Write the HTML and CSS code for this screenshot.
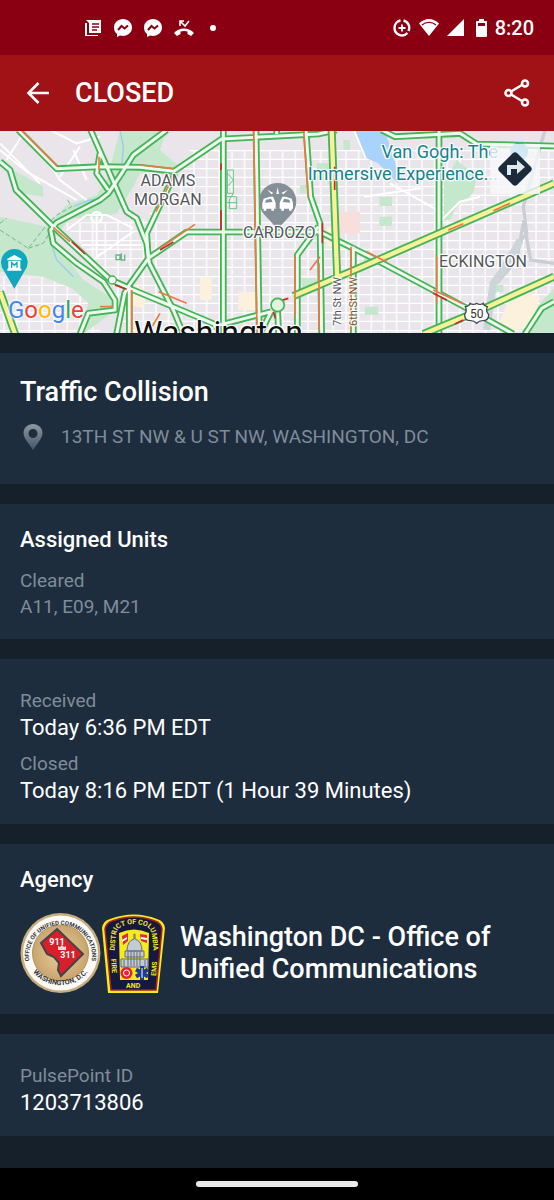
FILE: index.html
```html
<!DOCTYPE html>
<html lang="en">
<head>
  <meta charset="UTF-8" />
  <meta name="viewport" content="width=device-width, initial-scale=1.0" />
  <title>Traffic Collision - PulsePoint</title>
  <link rel="stylesheet" href="styles.css">
</head>
<body>
  <div class="status-bar">
    <div class="status-left">
      <svg width="18" height="18" viewBox="0 0 18 18"><path fill="#fff" d="M5 1h12v13H5V4L2 1zM1 4h2v12h11v1H1z"/><path stroke="#8a0012" stroke-width="1.4" d="M8 5h7M8 8h7M8 11h5"/></svg>
      <svg width="18" height="18" viewBox="0 0 18 18"><path fill="#fff" d="M9 0c5 0 9 3.600 9 8.500S14 17 9 17l-3-.4L3 18v-3C1 13.500 0 11 0 8.500 0 3.600 4 0 9 0z"/><path fill="none" stroke="#8a0012" stroke-width="2" d="M4 11l3.500-4 3 2.500L14 6.500"/></svg>
      <svg width="18" height="18" viewBox="0 0 18 18"><path fill="#fff" d="M9 0c5 0 9 3.600 9 8.500S14 17 9 17l-3-.4L3 18v-3C1 13.500 0 11 0 8.500 0 3.600 4 0 9 0z"/><path fill="none" stroke="#8a0012" stroke-width="2" d="M4 11l3.500-4 3 2.500L14 6.500"/></svg>
      <svg width="20" height="18" viewBox="0 0 20 18"><path fill="none" stroke="#fff" stroke-width="1.600" d="M6 7V2h4M6 2l5 5 4-5"/><path fill="#fff" d="M0 14C5 8 15 8 20 14l-3 3-3.500-2v-2.500c-2-.8-5-.8-7 0V15L3 17z"/></svg>
      <span class="dot"></span>
    </div>
    <div class="status-right">
      <svg width="18" height="18" viewBox="0 0 18 18" fill="none" stroke="#fff"><path stroke-width="2.400" d="M7.500 1.500A7.500 7.500 0 0 0 1.500 9a7.500 7.500 0 0 0 13 5M10.500 1.500a7.500 7.500 0 0 1 5 10.500"/><path stroke-width="1.800" d="M9 5.500v7M5.500 9h7"/></svg>
      <svg width="20" height="17" viewBox="0 0 20 17"><path fill="#fff" d="M0 4.500C6-1.500 14-1.500 20 4.500L10 17z"/><path fill="none" stroke="#8a0012" stroke-width="1.300" d="M3 6c4-3.500 10-3.500 14 0"/></svg>
      <svg width="17" height="17" viewBox="0 0 17 17"><path fill="#fff" d="M17 0v17H0z"/></svg>
      <svg class="battery" width="11" height="18" viewBox="0 0 11 18"><path fill="#fff" d="M3 0h5v2h2q1 0 1 1v14q0 1-1 1H1q-1 0-1-1V3q0-1 1-1h2z"/><path fill="#8a0012" d="M2 4h7v3H2z"/></svg>
      <span class="clock">8:20</span>
    </div>
  </div>

  <header class="app-bar">
    <button class="icon-btn" type="button" aria-label="Back">
      <svg width="24" height="24" viewBox="0 0 24 24" fill="none" stroke="#fff" stroke-width="2.600"><path d="M23 12H3M12.500 2L2.500 12l10 10"/></svg>
    </button>
    <h1>CLOSED</h1>
    <button class="icon-btn" type="button" aria-label="Share">
      <svg width="26" height="28" viewBox="0 0 26 28" fill="none" stroke="#fff" stroke-width="2.600"><path d="M7 12.500L18 6M7 15.500L18 22"/><circle cx="4.500" cy="14" r="3"/><circle cx="21" cy="4.500" r="3"/><circle cx="21" cy="23.500" r="3"/></svg>
    </button>
  </header>

  <div class="map">
    <svg class="map-tiles" viewBox="0 3 1662 606" preserveAspectRatio="xMidYMid slice">
      <defs>
        <pattern id="grid" width="76" height="54" patternUnits="userSpaceOnUse">
          <path class="street" d="M0 8H76M0 34H76M12 0V54M50 0V54"/>
        </pattern>
      </defs>
      <rect width="1662" height="612" fill="#e9e5eb"/>
      <path fill="url(#grid)" d="M190 280L430 270 540 150 570 60H1662V612H380L330 440z"/>
      <path fill="url(#grid)" d="M0 440H180L300 540V612H0z"/>
      <path class="park" d="M360 0H500L480 60 540 110 420 130 400 170 350 250 300 262 210 265 160 330 250 450 330 500 340 545 250 612H240L265 520 215 475 130 440 0 425V260L140 290 200 225 290 195 320 150z"/>
      <path class="park" d="M0 100L40 120 130 170 130 200 60 190z"/>
      <path class="park" d="M1370 90L1430 140 1420 190 1370 230 1350 270H1332V160z"/>
      <path class="park" d="M1560 612L1620 520 1662 475V612zM950 100h50v50h-50zM1030 30h20v30h-20zM1138 200h38v28h-38zM1138 260h38v28h-38zM1092 365l40 15-10 25-30-10zM905 445h45v30h-45zM900 165h25v25h-25zM1095 530h40v25h-40zM1480 465h30v20h-30zM1340 0h30v25h-30z"/>
      <path fill="#f9dfdc" d="M1010 245h70v65h-70z"/>
      <path fill="#fbf1dc" d="M600 440h35v70h-35zM390 455l50 30-10 50-40-10zM715 485h60v55h-60zM1540 475l80 25-30 90-70 18-25-25zM980 290h35v60h-35z"/>
      <path fill="#a9d3fb" d="M1062 0h92l32 100 8 60-60-60-44-20z"/>
      <path class="lane" d="M1062 0l35 85M1092 200l170-25M1320 275l60-60 60-15M0 60l80 65 150 85M0 40l120 120M150 0L230 40 300 20M70 10L20 90M120 60l60 90 80 60M180 140l60-90M220 60l40 90M200 300l60-45h60l80 40M270 395l130-90M245 345h180M290 250v130M1170 160l160 90"/>
      <circle class="lane" cx="290" cy="262" r="16"/>
      <path fill="none" stroke="#9dc9f6" stroke-width="4" d="M360 0l10 50-5 70M150 330l20 60 50 50M220 230l50-20 50-5"/>
      <path fill="none" stroke="#c9ced4" stroke-width="10" d="M1635 0L1570 230 1580 310 1530 370 1480 460 1460 560M1662 400l-70-10-22-120M1570 280l-20 110-60 70"/>
      <path fill="none" stroke="#ccd5d9" stroke-width="22" d="M1560 330l-30 60-50 70-20 140"/>
      <path fill="none" stroke="#78b58d" stroke-width="3" stroke-dasharray="14 7" d="M0 300l85 55 55-70 30-30 45-25-15-25M85 355l45-15 30-50M0 280l20-15"/>
      <path fill="none" stroke="#62c883" stroke-width="3" d="M682 120h18v70h-18zM682 130l18 20-18 20M700 190l-12 20v26h22v-36M680 200h28M680 218h28"/>
      <path fill="none" stroke="#62b883" stroke-width="4" d="M348 375v14h12v-14zM364 370v20h10v-16"/>

      <!-- roads with live traffic: coloured edge, light centre -->
      <g class="edge">
        <path id="r1" d="M55 0L170 116 300 110 420 112 522 124 665 27 955 12 1010 0"/>
        <path id="r2" d="M272 0L380 245 410 265 440 340 448 400 520 540 550 612"/>
        <path id="r3" d="M0 95L30 120 48 180 160 290 330 448 400 480 650 585"/>
        <path id="r4" d="M500 0L400 75 365 130 325 190 300 210 170 278 152 300 160 340 230 400 310 455 345 510 345 540 265 550 240 612"/>
        <path id="r5" d="M350 612L374 490 388 465 445 385 560 306H960M388 470V612"/>
        <path id="r6" d="M525 130L440 310 445 385M300 70L290 130 325 180"/>
        <path id="r7" d="M670 0V612M768 0L778 612M918 0L932 200 960 280 965 612M1317 0V612M1060 350V612"/>
        <path id="r8" d="M955 290L892 375V612M960 306L1110 380 1392 530 1540 612M813 545L640 590M833 545L836 612M813 545L780 612"/>
        <path id="r9" d="M1145 0L1185 20 1380 10 1430 42 1662 48M1662 515L1625 535 1575 612M830 0V12"/>
      </g>
      <g class="core">
        <use href="#r1"/><use href="#r2"/><use href="#r3"/><use href="#r4"/><use href="#r5"/><use href="#r6"/><use href="#r7"/><use href="#r8"/><use href="#r9"/>
      </g>
      <g class="edge wide">
        <path id="h1" d="M995 0L1012 455M880 498L1092 408 1662 160M1270 612L1430 545 1662 440M0 485L50 625"/>
      </g>
      <use class="core highway" href="#h1"/>
      <g class="slow">
        <path d="M65 2L172 109M420 105L520 116M518 142L468 245M297 80V120M160 292L210 335M395 480V612M476 485L560 520M585 283L480 355M761 0L771 612M911 0L925 200M957 400V600M1053 350V600M885 380V560M1310 380V520M930 420L960 380M1100 365L1160 396M1345 300L1390 281M1480 242L1530 220M1300 480L1390 522M300 530H340M480 550L450 600"/>
      </g>
      <path class="jam" d="M215 335L255 372M345 465L380 478M480 360L520 336M663 100V120M663 240V300M1004 110V180M967 280V340M1300 490L1340 510M820 545L826 565M843 512L865 505M1365 582L1390 570"/>
      <circle cx="833" cy="525" r="20" fill="#dff3df" stroke="#43b555" stroke-width="5"/>
      <circle cx="337" cy="450" r="12" fill="#fff" stroke="#43b555" stroke-width="4"/>
      <path fill="#fff" stroke="#444b52" stroke-width="4" d="M1396 530q12-2 14-10 10 6 20 0 10 6 20 0 2 8 12 10-6 12 4 24 0 18-18 18-10 0-18 8-8-8-18-8-18 0-18-18 8-12 2-24z"/>

      <!-- incident pin -->
      <path fill="#858f98" d="M833 297L793 254A56 56 0 1 1 873 254z"/>
      <path fill="#fff" d="M787 220l4-14 18-6h10l6 14 2 6v16h-5v6h-8v-6h-15v6h-8v-6h-4zM879 220l-4-14-18-6h-10l-6 14-2 6v16h5v6h8v-6h15v6h8v-6h4zM829 192l4-20 4 20zM814 193l-12-14 18 10zM850 193l14-14-20 10z"/>
      <path fill="#858f98" d="M795 218l3-9 15-3 5 10zM871 218l-3-9-15-3-5 10z"/>
      <!-- museum pin -->
      <path fill="#13a7bd" d="M43 476L11 421A40 40 0 1 1 75 421z"/>
      <path fill="#fff" d="M22 386l21-11 21 11v5H22zM25 393h36v23h3v6H22v-6h3z"/>
      <path fill="none" stroke="#13a7bd" stroke-width="4" d="M35 413v-15l8 8 8-8v15"/>
      <circle cx="1558" cy="64" r="27" fill="#35afe2"/>
    </svg>
    <span class="place adams">ADAMS<br>MORGAN</span>
    <span class="place cardozo">CARDOZO</span>
    <span class="place eckington">ECKINGTON</span>
    <span class="place city">Washington</span>
    <span class="place poi">Van Gogh: The<br>Immersive Experience...</span>
    <span class="place street-name seventh">7th St NW</span>
    <span class="place street-name sixth">6th St NW</span>
    <span class="place route">50</span>
    <span class="google"><i class="b">G</i><i class="r">o</i><i class="y">o</i><i class="b">g</i><i class="g">l</i><i class="r">e</i></span>
    <button class="directions" type="button" aria-label="Directions">
      <svg width="34" height="34" viewBox="0 0 34 34"><path fill="#1c2b3b" d="M15 1q2-1.500 4 0l14 14q1.500 2 0 4L19 33q-2 1.500-4 0L1 19q-1.500-2 0-4z"/><path fill="#dfe9ee" d="M9 23V13h10V8l8 7-8 7v-5h-6v6z"/></svg>
    </button>
  </div>

  <main>
    <section class="card incident">
      <h2 class="title">Traffic Collision</h2>
      <p class="address">
        <svg width="20" height="26" viewBox="0 0 20 26"><defs><linearGradient id="pin" x2="0" y2="1"><stop stop-color="#8d98a5"/><stop offset="1" stop-color="#455363"/></linearGradient></defs><path fill="url(#pin)" fill-rule="evenodd" d="M10 26L3 16C-3 7 3 0 10 0s13 7 7 16zM10 5a4.500 4.500 0 1 0 0 9 4.500 4.500 0 0 0 0-9z"/></svg>
        <span>13TH ST NW &amp; U ST NW, WASHINGTON, DC</span>
      </p>
    </section>

    <section class="card units">
      <h3>Assigned Units</h3>
      <p class="label">Cleared</p>
      <p class="label">A11, E09, M21</p>
    </section>

    <section class="card fields">
      <p class="label">Received</p>
      <p class="value">Today 6:36 PM EDT</p>
      <p class="label">Closed</p>
      <p class="value">Today 8:16 PM EDT (1 Hour 39 Minutes)</p>
    </section>

    <section class="card agency">
      <h3>Agency</h3>
      <div class="agency-row">
        <svg width="146" height="82" viewBox="0 0 146 82">
          <defs>
            <radialGradient id="gold"><stop stop-color="#e8cf9f"/><stop offset="1" stop-color="#c9a56e"/></radialGradient>
            <path id="arcTop" d="M9.500 50A31.500 31.500 0 1 1 71.500 50"/>
            <path id="arcBottom" d="M6 46A35.500 35.500 0 0 0 75 46"/>
            <path id="shieldArc" d="M94 43L96 23Q97 16 103 14 114 10 125 14 131 16 132 23L134 43"/>
          </defs>
          <!-- Office of Unified Communications seal -->
          <circle cx="40.500" cy="41" r="40" fill="#c9ad7c"/>
          <circle cx="40.500" cy="41" r="37.500" fill="#fbfaf6"/>
          <circle cx="40.500" cy="41" r="28" fill="url(#gold)" stroke="#b3925c"/>
          <path fill="#d91f2a" stroke="#424448" stroke-width="2" d="M37 17L63 42 41 64 38 58 39 51 34 45 27 42 21 31z"/>
          <text class="seal-num" x="37" y="33">911</text>
          <text class="seal-num" x="48" y="46">311</text>
          <path fill="#f3d3d4" d="M38 38V34l2 1 2-2 2 2 2-1v4z"/>
          <text class="seal-text"><textPath href="#arcTop" startOffset="50%" text-anchor="middle">OFFICE OF UNIFIED COMMUNICATIONS</textPath></text>
          <text class="seal-text seal-city"><textPath href="#arcBottom" startOffset="50%" text-anchor="middle">WASHINGTON, D.C.</textPath></text>
          <!-- Fire and EMS patch -->
          <path fill="#f7ea1d" d="M82 16Q83 9 90 7 114-2 137 7 144 9 145 16L138 81H88z"/>
          <path fill="#15193f" stroke="#a52023" stroke-width="1.500" d="M85 17Q86 11 92 9 114 1 135 9 141 11 142 17L136 78H91z"/>
          <path fill="#f7ea1d" d="M99 21Q114 14 129 21L128 68H100z"/>
          <path fill="#d6303a" d="M102 24l6-3v8l-5 4zM120 22l7 1v8l-6-2z"/>
          <path fill="#fff" d="M102 28l5-3v2l-5 3zM121 25l6 1v2l-6-1z"/>
          <path fill="#c4cbd6" stroke="#626b7b" d="M107 39q0-10 7-12v-5h1v5q7 2 7 12zM105 39h19v6h-19zM101 47h27v8h-27z"/>
          <path stroke="#626b7b" d="M108 40v14M111 40v14M114 40v14M117 40v14M120 40v14M104 48v7M125 48v7"/>
          <circle cx="106.500" cy="61" r="6" fill="#e3222c"/>
          <circle cx="106.500" cy="61" r="3" fill="none" stroke="#fff"/>
          <path stroke="#1d3c93" stroke-width="4" d="M122 54v14M116 57.500l12 7M116 64.500l12-7"/>
          <path stroke="#fff" d="M122 56v10"/>
          <text class="patch-text"><textPath href="#shieldArc" startOffset="50%" text-anchor="middle">DISTRICT OF COLUMBIA</textPath></text>
          <text class="patch-text" transform="translate(91 47) rotate(86)">FIRE</text>
          <text class="patch-text" transform="translate(136 64) rotate(-86)">EMS</text>
          <text class="patch-text" x="106" y="76">AND</text>
        </svg>
        <p class="title">Washington DC - Office of Unified Communications</p>
      </div>
    </section>

    <section class="card fields">
      <p class="label">PulsePoint ID</p>
      <p class="value">1203713806</p>
    </section>
  </main>

  <div class="nav-bar"><span class="handle"></span></div>
</body>
</html>
```
FILE: styles.css
```css
* {
  box-sizing: border-box;
}

body {
  margin: 0;
  min-height: 100vh;
  display: flex;
  flex-direction: column;
  background: #15202b;
  color: #fff;
  font-family: Roboto, sans-serif;
}

h1, h2, h3, p {
  margin: 0;
  font-weight: 500;
}

svg {
  display: block;
  flex: none;
}

button {
  padding: 0;
  border: none;
  background: none;
  cursor: pointer;
}

/* Status bar */
.status-bar {
  display: flex;
  justify-content: space-between;
  align-items: center;
  height: 55px;
  padding: 0 20px 0 84px;
  background: #8a0012;
}

.status-left,
.status-right {
  display: flex;
  align-items: center;
  gap: 12px;
}

.status-right {
  gap: 8px;
}

.dot {
  width: 6px;
  height: 6px;
  margin-left: 4px;
  border-radius: 50%;
  background: #fff;
}

.battery {
  margin-left: 4px;
}

.clock {
  font-size: 20px;
  font-weight: 500;
}

/* App bar */
.app-bar {
  display: flex;
  align-items: center;
  height: 76px;
  padding: 0 24px 0 26px;
  background: #a01216;
}

.app-bar h1 {
  flex: 1;
  padding-left: 25px;
  font-size: 27px;
}

/* Map */
.map {
  position: relative;
  height: 202px;
  overflow: hidden;
}

.map-tiles {
  width: 100%;
  height: 100%;
}

.street, .lane {
  fill: none;
  stroke: #fff;
  stroke-width: 4;
}

.lane {
  stroke-width: 6;
}

.park {
  fill: #c5e8cd;
}

.edge, .core, .slow, .jam {
  fill: none;
  stroke: #43b555;
  stroke-width: 20;
  stroke-linejoin: round;
}

.core {
  stroke: #eefaef;
  stroke-width: 9;
}

.edge.wide {
  stroke-width: 24;
}

.core.highway {
  stroke: #fbf09a;
  stroke-width: 13;
}

.slow {
  stroke: #ee7843;
  stroke-width: 5;
}

.jam {
  stroke: #c62a2a;
  stroke-width: 5;
}

.place {
  position: absolute;
  color: #53565b;
  font-size: 16px;
  line-height: 19px;
  text-align: center;
  white-space: nowrap;
  text-shadow: 0 0 2px #fff, 1px 1px 1px #fff, -1px -1px 1px #fff, 1px -1px 1px #fff, -1px 1px 1px #fff;
}

.adams {
  left: 134px;
  top: 40px;
}

.cardozo {
  left: 243px;
  top: 92px;
}

.eckington {
  left: 439px;
  top: 121px;
}

.city {
  left: 134px;
  top: 182px;
  color: #111;
  font-size: 32px;
  line-height: 38px;
}

.poi {
  right: 56px;
  top: 10px;
  color: #128390;
  font-size: 18px;
  line-height: 22px;
  text-align: right;
}

.street-name {
  top: 146px;
  font-size: 11px;
  line-height: 12px;
  writing-mode: vertical-rl;
  transform: rotate(180deg);
}

.seventh {
  left: 332px;
}

.sixth {
  left: 348px;
  color: #80552c;
}

.route {
  left: 470px;
  top: 174px;
  font-size: 12px;
  color: #333;
}

.google {
  position: absolute;
  left: 8px;
  top: 164px;
  font-size: 24px;
  line-height: 30px;
  text-shadow: 0 0 3px #fff, 0 0 3px #fff;
}

.google i {
  font-style: normal;
}

.google .b { color: #4285f4; }
.google .r { color: #ea4335; }
.google .y { color: #fbbc05; }
.google .g { color: #34a853; }

.directions {
  position: absolute;
  right: 14px;
  top: 13px;
  padding: 8px;
  background: rgba(248, 248, 250, 0.8);
}

/* Incident details */
main {
  flex: 1;
  display: flex;
  flex-direction: column;
  gap: 20px;
  padding: 20px 0;
}

.card {
  padding: 22px 20px 20px;
  background: #1e2d3d;
}

.title {
  font-size: 27px;
  line-height: 32px;
}

.incident {
  padding-top: 23px;
  padding-bottom: 33px;
}

.address {
  display: flex;
  align-items: center;
  gap: 18px;
  margin-top: 15px;
  padding-left: 3px;
  color: #7f8c9a;
  font-size: 19px;
  font-weight: 400;
  line-height: 28px;
}

.card h3 {
  font-size: 22px;
  line-height: 28px;
}

.units {
  padding-bottom: 19px;
}

.units h3 {
  margin-bottom: 14px;
}

.label {
  color: #7f8c9a;
  font-size: 19px;
  font-weight: 400;
  line-height: 26px;
}

.value {
  font-size: 22px;
  font-weight: 400;
  line-height: 28px;
}

.fields {
  padding-top: 29px;
  padding-bottom: 19px;
}

.value + .label {
  margin-top: 9px;
}

.agency-row {
  display: flex;
  align-items: center;
  gap: 14px;
  margin-top: 18px;
}

.seal-num {
  fill: #fff;
  font-size: 9px;
  font-weight: 700;
  text-anchor: middle;
}

.seal-text {
  fill: #333;
  font-size: 6px;
  font-weight: 700;
}

.seal-city {
  font-size: 7px;
}

.patch-text {
  fill: #f7ea1d;
  font-size: 7px;
  font-weight: 700;
}

/* Gesture bar */
.nav-bar {
  display: flex;
  justify-content: center;
  align-items: center;
  height: 32px;
  background: #000;
}

.handle {
  width: 162px;
  height: 6px;
  border-radius: 3px;
  background: #ebebeb;
}
```
